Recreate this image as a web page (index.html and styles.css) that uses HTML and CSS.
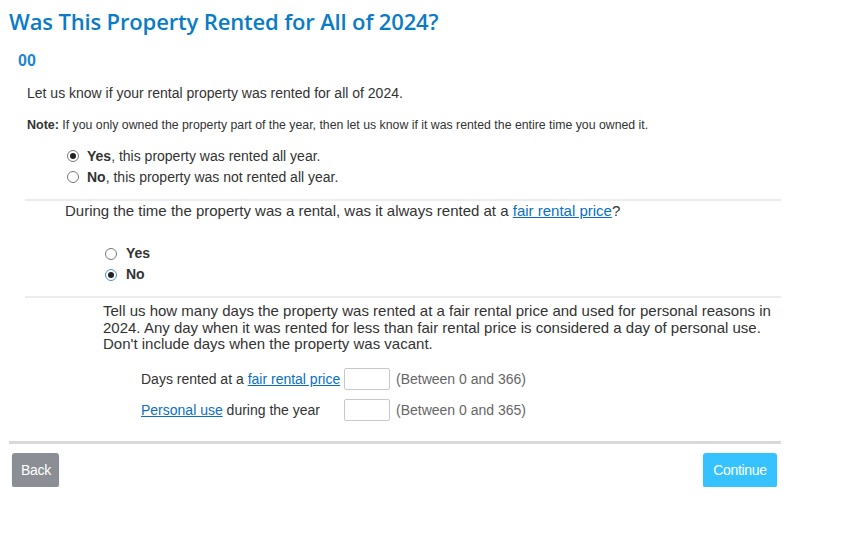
FILE: index.html
```html
<!DOCTYPE html>
<html>
<head>
<meta charset="utf-8">
<link rel="stylesheet" href="styles.css">
</head>
<body>
<div class="page">
  <h1 class="title">Was This Property Rented for All of 2024?</h1>
  <div class="code">00</div>
  <p class="intro">Let us know if your rental property was rented for all of 2024.</p>
  <p class="note"><b>Note:</b> If you only owned the property part of the year, then let us know if it was rented the entire time you owned it.</p>
  <div class="radios first">
    <label class="radio"><span class="dot on"></span><span><b>Yes</b>, this property was rented all year.</span></label>
    <label class="radio"><span class="dot"></span><span><b>No</b>, this property was not rented all year.</span></label>
  </div>
  <div class="section">
    <p class="question">During the time the property was a rental, was it always rented at a <a href="#">fair rental price</a>?</p>
    <div class="radios second">
      <label class="radio bold"><span class="dot"></span><span>Yes</span></label>
      <label class="radio bold"><span class="dot on focus"></span><span>No</span></label>
    </div>
  </div>
  <div class="section">
    <p class="tell">Tell us how many days the property was rented at a fair rental price and used for personal reasons in 2024. Any day when it was rented for less than fair rental price is considered a day of personal use. Don't include days when the property was vacant.</p>
    <div class="fields">
      <div class="field"><span class="flabel">Days rented at a <a href="#">fair rental price</a></span><span class="box"></span><span class="hint">(Between 0 and 366)</span></div>
      <div class="field"><span class="flabel"><a href="#">Personal use</a> during the year</span><span class="box"></span><span class="hint">(Between 0 and 365)</span></div>
    </div>
  </div>
  <div class="footer">
    <button class="btn back">Back</button>
    <button class="btn cont">Continue</button>
  </div>
</div>
</body>
</html>
```
FILE: styles.css
```css
* { box-sizing: border-box; }
body { margin: 0; background: #fff; font-family: "Liberation Sans", Arial, sans-serif; color: #333; }
.page { width: 781px; padding: 0 0 0 9px; }
.title { margin: 0; padding-top: 6px; font-family: "Open Sans", sans-serif; font-weight: 600; font-size: 22px; line-height: 30px; color: #0a7bc6; letter-spacing: -0.15px; }
.code { margin: 15px 0 0 9px; font-weight: bold; font-size: 16px; line-height: 20px; color: #1d84d1; }
.intro { margin: 14px 0 0 18px; font-size: 14px; line-height: 16px; }
.note { margin: 16px 0 0 18px; font-size: 12.3px; line-height: 16px; }
.note b { font-size: 12.5px; }
.radios { display: flex; flex-direction: column; }
.radios.first { margin: 15px 0 0 58px; gap: 5px; font-size: 14px; line-height: 16px; }
.radio { display: flex; align-items: center; gap: 8px; }
.dot { width: 12px; height: 12px; border: 1px solid #777; border-radius: 50%; display: inline-flex; align-items: center; justify-content: center; flex: none; background: #fff; }
.dot.on::after { content: ""; width: 6px; height: 6px; border-radius: 50%; background: #222; }
.dot.focus { border-color: #4b8ee6; }
.section { margin: 14px 0 0 16px; border-top: 2px solid #ececec; }
.question { margin: 1px 0 0 40px; font-size: 15px; line-height: 17px; }
a { color: #0a70c2; text-decoration: underline; }
.radios.second { margin: 26px 0 0 80px; gap: 4px; font-size: 14px; line-height: 17px; }
.radio.bold { font-weight: bold; gap: 9px; }
.section + .section { margin-top: 13px; }
.tell { margin: 5px 0 0 78px; font-size: 15px; line-height: 16.5px; }
.fields { margin: 15px 0 0 116px; display: flex; flex-direction: column; gap: 9px; font-size: 14px; }
.field { display: flex; align-items: center; }
.flabel { width: 203px; }
.box { width: 46px; height: 22px; border: 1px solid #c8c8c8; border-radius: 2px; }
.hint { margin-left: 6px; color: #666; }
.footer { margin-top: 20px; border-top: 3px solid #d9d9d9; display: flex; justify-content: space-between; padding: 9px 4px 0 3px; }
.btn { border: none; border-radius: 3px; color: #fff; font-family: "Liberation Sans", Arial, sans-serif; font-size: 14px; height: 34px; padding: 0 9px; box-shadow: 0 1px 1px rgba(0,0,0,0.3); letter-spacing: -0.3px; }
.back { background: #8b8e95; width: 47px; }
.cont { background: #36c2fe; width: 74px; }
```
